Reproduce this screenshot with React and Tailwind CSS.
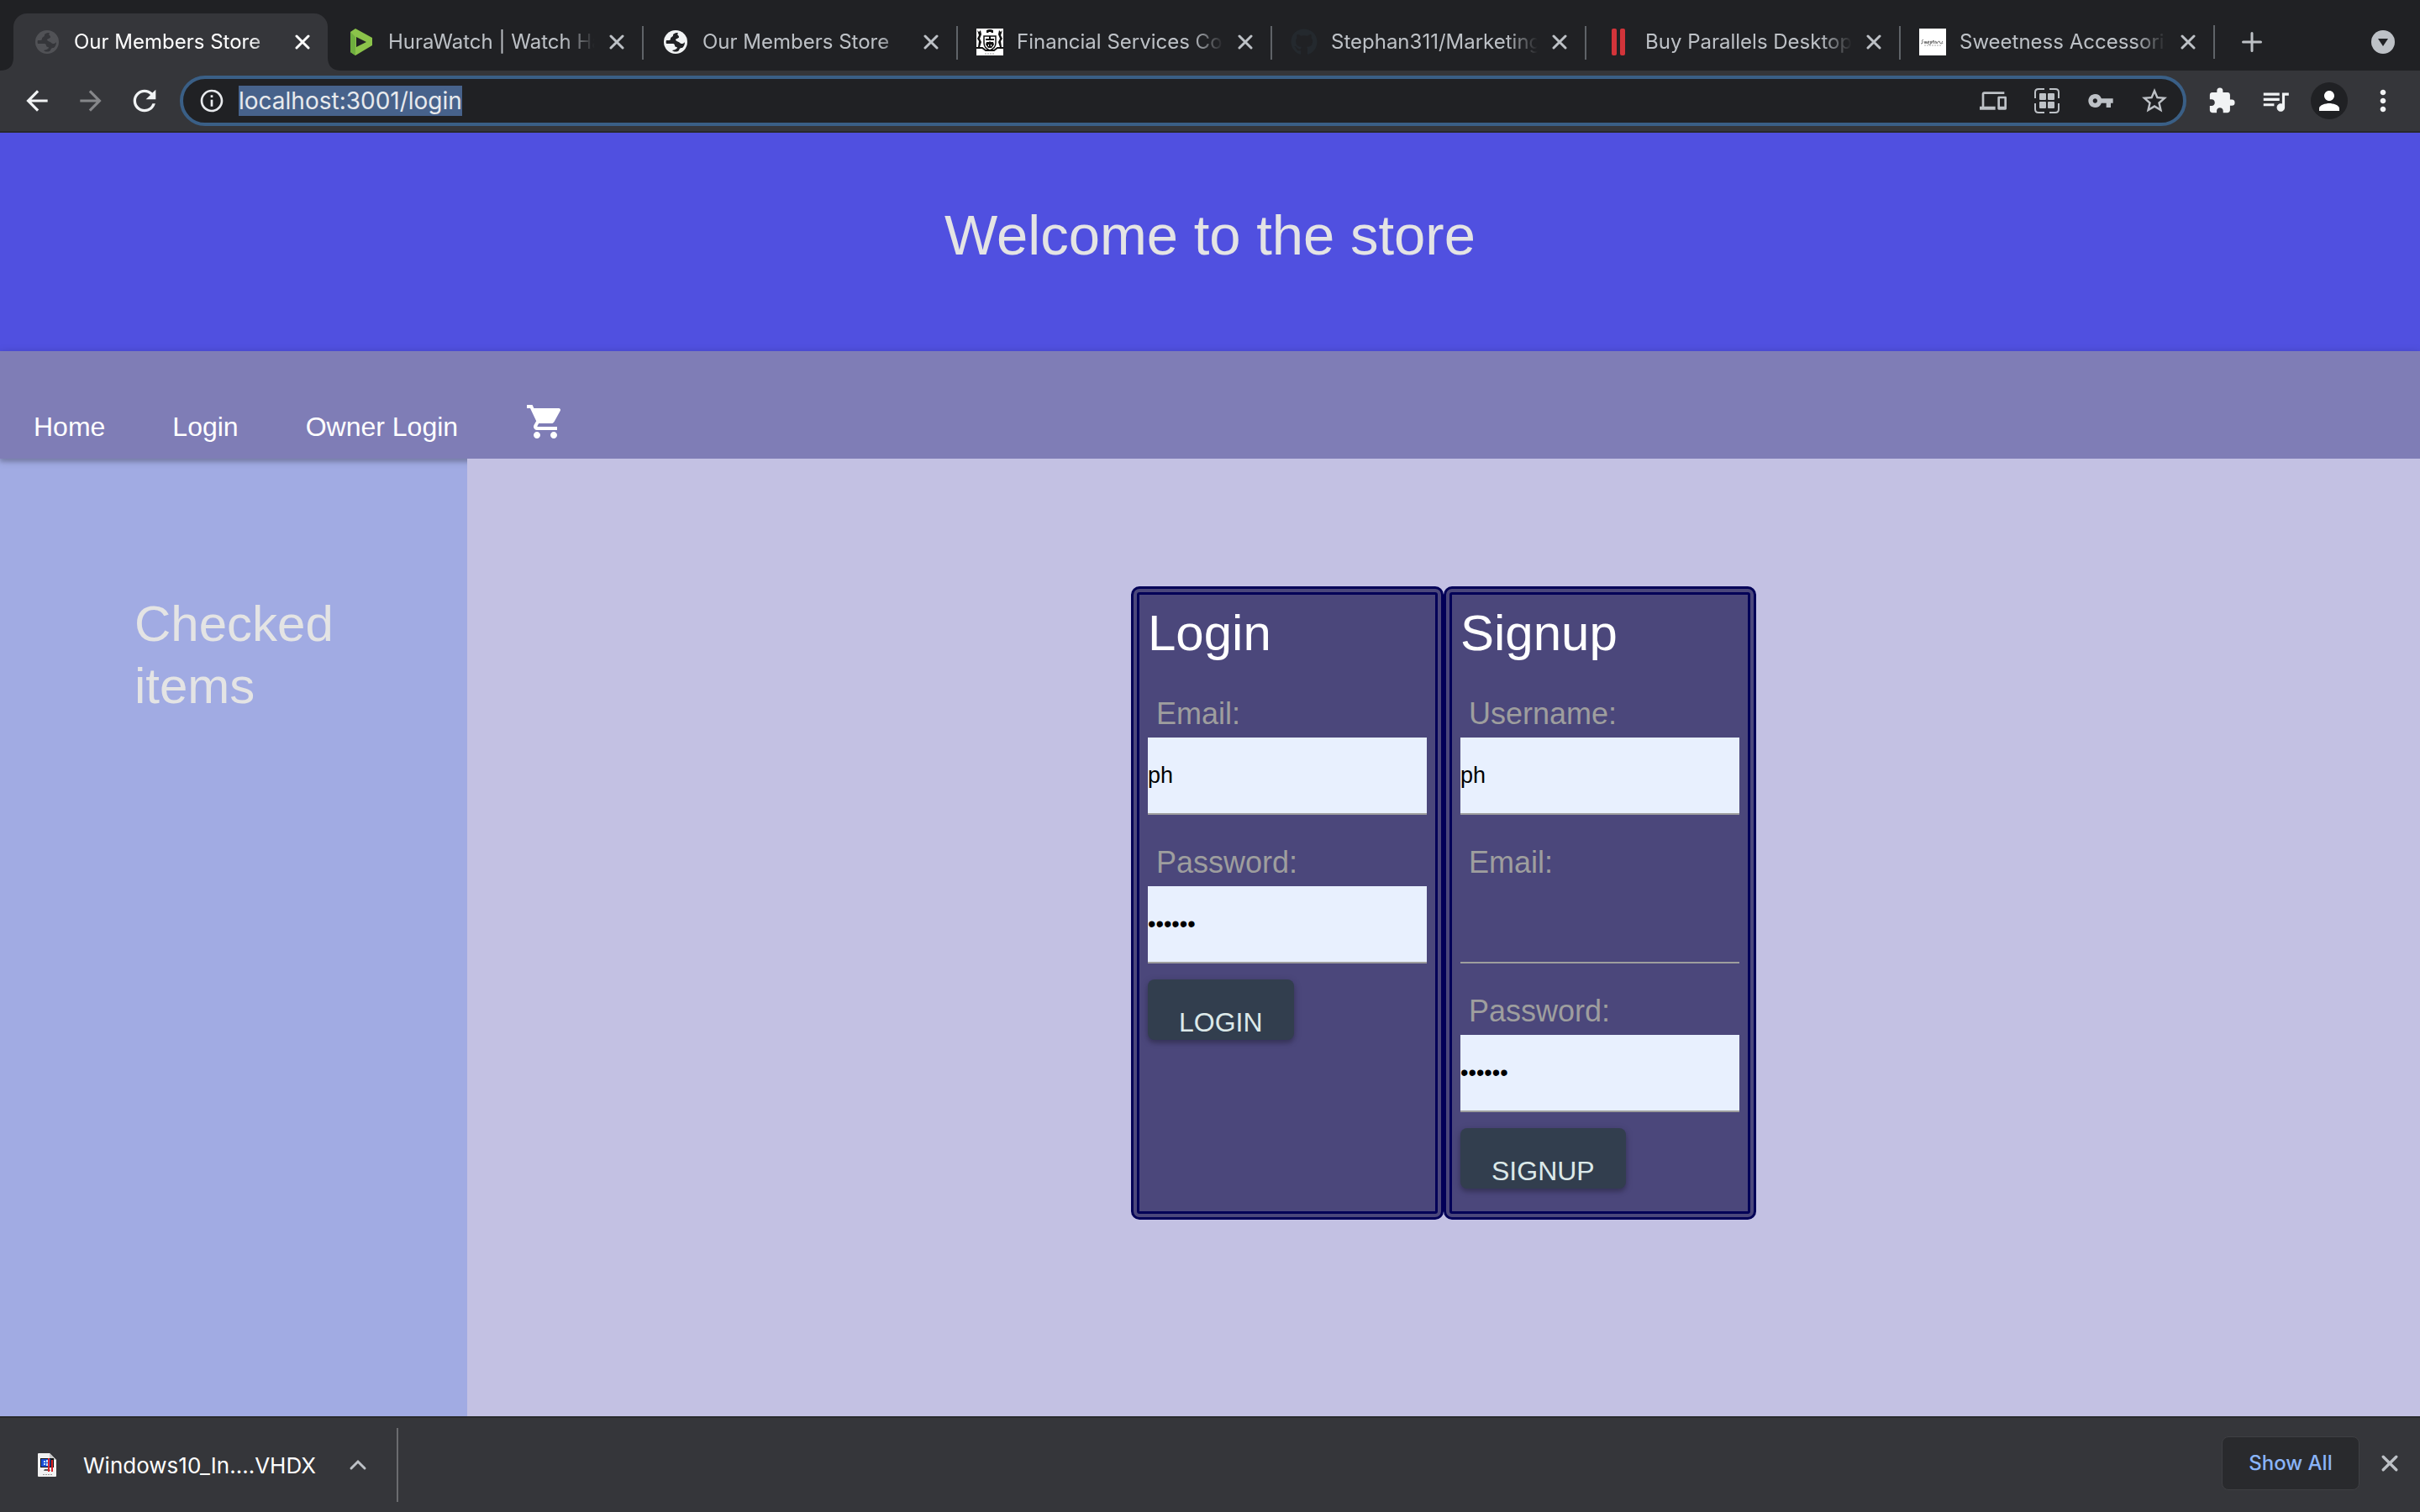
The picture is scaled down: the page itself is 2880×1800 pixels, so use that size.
import { useState } from "react";
import {
  MdArrowBack,
  MdArrowForward,
  MdDevices,
  MdExtension,
  MdInfoOutline,
  MdMoreVert,
  MdPerson,
  MdQueueMusic,
  MdRefresh,
  MdShoppingCart,
  MdStarBorder,
  MdVpnKey,
} from "react-icons/md";
import { FaGithub } from "react-icons/fa";

function Globe({ className, land }) {
  return (
    <svg viewBox="0 0 28 28" className={className} width="28" height="28" aria-hidden="true">
      <circle cx="14" cy="14" r="14" fill="currentColor" />
      <path
        d="M17 3 C12 3 11 5 11 6 C11 8 8 8 8 10 C8 12 7 12 3 12 C2.500 13 2.500 15 3 16 H11 C14 16 12 20 15 20 C17 20 16 23 10 24 C12 26 16 26 18 24 C19 21 20 21 22 21 C24 19 25 17 25 14 C23 17 20 16 19 15 C18 13 15 14 15 12 C15 10 18 10 18 8 C18 6 15 6 17 3 Z"
        fill={land}
      />
      <path d="M14 12 C14 9 19 10 19 8 L22 7 L24 13 C22 15 18 14 14 12 Z" fill="currentColor" />
    </svg>
  );
}

function HuraLogo() {
  return (
    <svg viewBox="0 0 32 32" width="32" height="32" aria-hidden="true">
      <path d="M3 4 L9 0 L29 11 V20 L9 32 L3 28 Z" fill="#8bc34a" />
      <path d="M3 4 L9 10 V32 L3 28 Z" fill="#6fae3f" />
      <path d="M10 10 L22 16 L10 22 Z" fill="#202124" />
    </svg>
  );
}

function Crest() {
  return (
    <svg viewBox="0 0 32 32" width="32" height="32" aria-hidden="true">
      <rect width="32" height="32" fill="#fff" />
      <path d="M12 2q4-2 8 0v3h-2l-1-1h-2l-1 1h-2zM1 2l2 2 2-2 1 5-2 5 2 4-2 6H2l1-7-2-3 2-4zM31 2l-2 2-2-2-1 5 2 5-2 4 2 6h2l-1-7 2-3-2-4z" fill="#111" />
      <path d="M9 9h14v8q0 6-7 9q-7-3-7-9z" fill="none" stroke="#111" strokeWidth="1.500" />
      <path d="M15 9h2v3h4v2H11v-2h4zM12 16h3l1-1 1 1h3l1 3-3 4h-4l-3-4z" fill="#111" />
      <path d="M14 19h1v2h-1zM17 19h1v2h-1z" fill="#fff" />
      <path d="M0 23h7l4 3h10l4-3h7" fill="none" stroke="#111" strokeWidth="2" />
      <path d="M10 30h12" stroke="#999" strokeDasharray="2 1" />
    </svg>
  );
}

function ParallelsLogo() {
  return (
    <svg viewBox="0 0 32 32" width="32" height="32" aria-hidden="true">
      <rect x="8" width="6" height="32" rx="2" fill="#d2343a" />
      <rect x="18" width="6" height="32" rx="2" fill="#d2343a" />
    </svg>
  );
}

function SweetnessLogo() {
  return (
    <svg viewBox="0 0 32 32" width="32" height="32" aria-hidden="true">
      <rect width="32" height="32" fill="#fff" />
      <path d="M5 13q-3 1-1 3q1 2-2 2M6 15l1 3 1-3 1 3 2-3M11 17q2-2 0-2t0 3t3-1q2-2 0-2t0 3l3-4v4m-1-3h2m1 3v-3q2 0 2 3q1-3 3-3q0 3 3 3m1-3q-2 1 0 3" fill="none" stroke="#777" strokeWidth="1" />
      <path d="M6 20h20" stroke="#aaa" strokeDasharray="2 1" />
    </svg>
  );
}

function VhdxFile() {
  return (
    <svg viewBox="0 0 22 28" width="22" height="28" aria-hidden="true">
      <path d="M1 0h13l8 8v19q0 1-1 1H1q-1 0-1-1V1q0-1 1-1z" fill="#f1f1f1" />
      <path d="M14 0l8 8h-7q-1 0-1-1z" fill="#c9c9c9" />
      <rect x="3" y="6" width="16" height="11" fill="#111" />
      <rect x="4" y="7" width="11" height="9" fill="#1c4fd8" />
      <path d="M7 9h2v2H7zM10 8h2v3h-2zM7 12h2v2H7zM10 12h2v3h-2z" fill="#bfe3ff" />
      <path d="M8 19h6l1 2H7z" fill="#555" />
      <path d="M12 6h2v16h-2zM16 8h2v14h-2z" fill="#d8232a" />
      <path d="M6 25.500h11" stroke="#999" strokeDasharray="2 1" />
    </svg>
  );
}

function Cross({ size }) {
  return (
    <svg viewBox="0 0 18 18" width={size} height={size} aria-hidden="true">
      <path d="M2 2l14 14M16 2L2 16" stroke="currentColor" strokeWidth="3" strokeLinecap="round" />
    </svg>
  );
}

function GridFrame() {
  return (
    <svg viewBox="0 0 30 30" width="30" height="30" aria-hidden="true">
      <path d="M1 12V5q0-4 4-4h7M18 1h7q4 0 4 4v7M29 18v7q0 4-4 4h-7M12 29H5q-4 0-4-4v-7" fill="none" stroke="currentColor" strokeWidth="2" />
      <path d="M7 6h6q1 0 1 1v6q0 1-1 1H7q-1 0-1-1V7q0-1 1-1zM17 6h6q1 0 1 1v6q0 1-1 1h-6q-1 0-1-1V7q0-1 1-1zM7 16h6q1 0 1 1v6q0 1-1 1H7q-1 0-1-1v-6q0-1 1-1zM17 16h6q1 0 1 1v6q0 1-1 1h-6q-1 0-1-1v-6q0-1 1-1z" fill="currentColor" />
    </svg>
  );
}

const tabs = [
  { title: "Our Members Store", icon: <Globe className="text-[#515256]" land="#35363a" />, active: true },
  { title: "HuraWatch | Watch Ha", icon: <HuraLogo /> },
  { title: "Our Members Store", icon: <Globe className="text-[#f1f3f4]" land="#202124" />, divider: true },
  { title: "Financial Services Cor", icon: <Crest />, divider: true },
  { title: "Stephan311/Marketing", icon: <FaGithub size={32} color="#24292e" />, divider: true },
  { title: "Buy Parallels Desktop", icon: <ParallelsLogo />, divider: true },
  { title: "Sweetness Accessorie", icon: <SweetnessLogo />, divider: true },
];

function Flare({ className, d }) {
  return (
    <svg viewBox="0 0 16 16" className={"absolute bottom-0 size-4 text-[#35363a] " + className} aria-hidden="true">
      <path d={d} fill="currentColor" />
    </svg>
  );
}

function Tab({ title, icon, active, divider }) {
  const shape = active
    ? "bg-[#35363a] text-white rounded-t-2xl"
    : "text-[#bdc1c6]";
  return (
    <div className={"relative flex h-[68px] min-w-0 w-[374px] items-center pl-6 " + shape}>
      {active && <Flare className="-left-4" d="M16 0v16H0Q16 16 16 0z" />}
      {active && <Flare className="-right-4" d="M0 0v16h16Q0 16 0 0z" />}
      {divider && <span className="absolute top-[15px] left-0 h-10 w-0.5 bg-[#5f6368]" />}
      <span className="flex size-8 shrink-0 items-center justify-center">{icon}</span>
      <span className="ml-4 min-w-0 flex-1 overflow-hidden whitespace-nowrap text-[24px] leading-8 mask-r-from-85%">
        {title}
      </span>
      <button type="button" aria-label={"Close " + title} className="mr-1 flex w-[52px] shrink-0 justify-center">
        <Cross size={18} />
      </button>
    </div>
  );
}

function ToolButton({ label, children, className = "" }) {
  return (
    <button type="button" aria-label={label} className={"flex w-16 shrink-0 items-center justify-center " + className}>
      {children}
    </button>
  );
}

function Browser() {
  const [url, setUrl] = useState("localhost:3001/login");
  return (
    <div className="shrink-0 bg-[#202124] font-[Inter,sans-serif]">
      <div className="flex items-center pt-4 pr-3 pl-4">
        {tabs.map((tab, i) => (
          <Tab key={i} {...tab} />
        ))}
        <span className="h-10 w-0.5 bg-[#5f6368]" />
        <button type="button" aria-label="New tab" className="flex w-[88px] justify-center text-[#bdc1c6]">
          <svg viewBox="0 0 24 24" width="24" height="24">
            <path d="M12 1.500v21M1.500 12h21" stroke="currentColor" strokeWidth="3" strokeLinecap="round" />
          </svg>
        </button>
        <button type="button" aria-label="Search tabs" className="ml-auto flex w-16 justify-center">
          <svg viewBox="0 0 28 28" width="28" height="28">
            <circle cx="14" cy="14" r="14" fill="#bdc1c6" />
            <path d="M8 10h12l-6 9z" fill="#202124" />
          </svg>
        </button>
      </div>
      <div className="flex h-[74px] items-center border-b-2 border-[#28292c] bg-[#35363a] pr-3 pl-3 text-[#f1f3f4]">
        <ToolButton label="Back"><MdArrowBack size={38} /></ToolButton>
        <ToolButton label="Forward" className="text-[#86878a]"><MdArrowForward size={38} /></ToolButton>
        <ToolButton label="Reload"><MdRefresh size={40} /></ToolButton>
        <div className="ml-2.5 flex h-[60px] min-w-0 flex-1 items-center rounded-full border-4 border-[#3a5f86] bg-[#202124] pr-0.5 pl-[18px] text-[#bdc1c6]">
          <MdInfoOutline size={32} className="shrink-0 text-[#e8eaed]" />
          <div className="ml-4 flex min-w-0 flex-1">
            <input
              aria-label="Address"
              value={url}
              onChange={(e) => setUrl(e.target.value)}
              className="field-sizing-content h-9 bg-[#47628b] text-[28px] leading-9 text-[#e8eaed] outline-none"
            />
          </div>
          <ToolButton label="Send to devices"><MdDevices size={32} /></ToolButton>
          <ToolButton label="Create code"><GridFrame /></ToolButton>
          <ToolButton label="Passwords"><MdVpnKey size={32} /></ToolButton>
          <ToolButton label="Bookmark"><MdStarBorder size={36} /></ToolButton>
        </div>
        <div className="ml-2.5 flex">
          <ToolButton label="Extensions"><MdExtension size={34} /></ToolButton>
          <ToolButton label="Media"><MdQueueMusic size={38} /></ToolButton>
          <ToolButton label="Profile">
            <span className="flex size-11 items-center justify-center rounded-full bg-[#202124] text-white">
              <MdPerson size={36} />
            </span>
          </ToolButton>
          <ToolButton label="Menu"><MdMoreVert size={40} /></ToolButton>
        </div>
      </div>
    </div>
  );
}

function Field({ id, label, type, initial }) {
  const [value, setValue] = useState(initial);
  const fill = value ? "bg-[#e8f0fe]" : "bg-transparent";
  return (
    <div>
      <label htmlFor={id} className="block pt-8 pb-1 pl-2.5 text-[36px] leading-[49px] text-[#9e9e9e]">
        {label}
      </label>
      <input
        id={id}
        type={type}
        value={value}
        onChange={(e) => setValue(e.target.value)}
        className={"block h-[92px] w-full border-b-2 border-[#9e9e9e] text-[27px] text-black outline-none " + fill}
      />
    </div>
  );
}

function Card({ title, action, fields }) {
  return (
    <form
      onSubmit={(e) => e.preventDefault()}
      className="w-[372px] rounded-[10px] border-[10px] border-double border-[#020057] bg-[#4b477b] px-2.5 pb-[27px]"
    >
      <h2 className="pt-2.5 pb-1 text-[60px] leading-[71px] text-white">{title}</h2>
      {fields.map((f) => (
        <Field key={f.id} {...f} />
      ))}
      <button
        type="submit"
        className="mt-[19px] flex h-[72px] items-end rounded-lg bg-[#323e4e] px-[37px] text-[32px] leading-[42px] text-[#dce9e9] shadow-[0_4px_4px_rgba(0,0,0,0.14),0_2px_10px_rgba(0,0,0,0.2)]"
      >
        {action}
      </button>
    </form>
  );
}

const loginFields = [
  { id: "login-email", label: "Email:", type: "text", initial: "ph" },
  { id: "login-password", label: "Password:", type: "password", initial: "secret" },
];

const signupFields = [
  { id: "signup-name", label: "Username:", type: "text", initial: "ph" },
  { id: "signup-email", label: "Email:", type: "text", initial: "" },
  { id: "signup-password", label: "Password:", type: "password", initial: "secret" },
];

function Store() {
  return (
    <div className="flex min-h-0 flex-1 flex-col font-['Liberation_Sans',sans-serif]">
      <header className="flex h-[260px] shrink-0 items-center justify-center bg-[#5050e0]">
        <h1 className="pb-4 text-[67px] leading-[80px] text-[#e4e4e4]">Welcome to the store</h1>
      </header>
      <nav className="relative flex h-32 shrink-0 items-end bg-[#7f7db6] text-[32px] leading-9 text-white shadow-[0_4px_4px_rgba(0,0,0,0.14),0_2px_10px_rgba(0,0,0,0.2)]">
        <a href="#home" className="px-10 pb-5">Home</a>
        <a href="#login" className="px-10 pb-5">Login</a>
        <a href="#owner" className="px-10 pb-5">Owner Login</a>
        <a href="#cart" aria-label="Cart" className="px-10 pb-5"><MdShoppingCart size={48} /></a>
      </nav>
      <div className="flex min-h-0 flex-1">
        <aside className="w-[556px] shrink-0 bg-[#a1abe3] px-40 pt-[160px]">
          <h2 className="text-[60px] leading-[74px] text-[#e4e4e4]">Checked items</h2>
        </aside>
        <main className="relative flex flex-1 items-start justify-center bg-[#c3c1e3] pt-[152px]">
          <div className="flex items-stretch">
            <Card title="Login" action="LOGIN" fields={loginFields} />
            <Card title="Signup" action="SIGNUP" fields={signupFields} />
          </div>
        </main>
      </div>
    </div>
  );
}

function DownloadBar() {
  return (
    <footer className="flex h-[114px] shrink-0 items-center border-t-2 border-[#28292c] bg-[#35363a] pr-[26px] pl-[45px] font-[Inter,sans-serif]">
      <VhdxFile />
      <span className="ml-8 text-[26px] text-white">Windows10_In....VHDX</span>
      <button type="button" aria-label="Download options" className="ml-[38px] text-[#bdc1c6]">
        <svg viewBox="0 0 24 16" width="24" height="16">
          <path d="M4 12l8-8 8 8" fill="none" stroke="currentColor" strokeWidth="3" strokeLinecap="round" />
        </svg>
      </button>
      <span className="ml-[34px] h-[88px] w-0.5 bg-[#6b6c6f]" />
      <div className="ml-auto flex items-center pb-1">
        <button type="button" className="h-16 w-[164px] rounded-lg border border-[#3f4044] bg-[#292a2d] text-[24px] font-medium text-[#8ab4f8]">
          Show All
        </button>
        <button type="button" aria-label="Close downloads" className="ml-[26px] text-[#bdc1c6]">
          <Cross size={20} />
        </button>
      </div>
    </footer>
  );
}

export default function App() {
  return (
    <div className="flex h-screen flex-col overflow-hidden">
      <Browser />
      <Store />
      <DownloadBar />
    </div>
  );
}
